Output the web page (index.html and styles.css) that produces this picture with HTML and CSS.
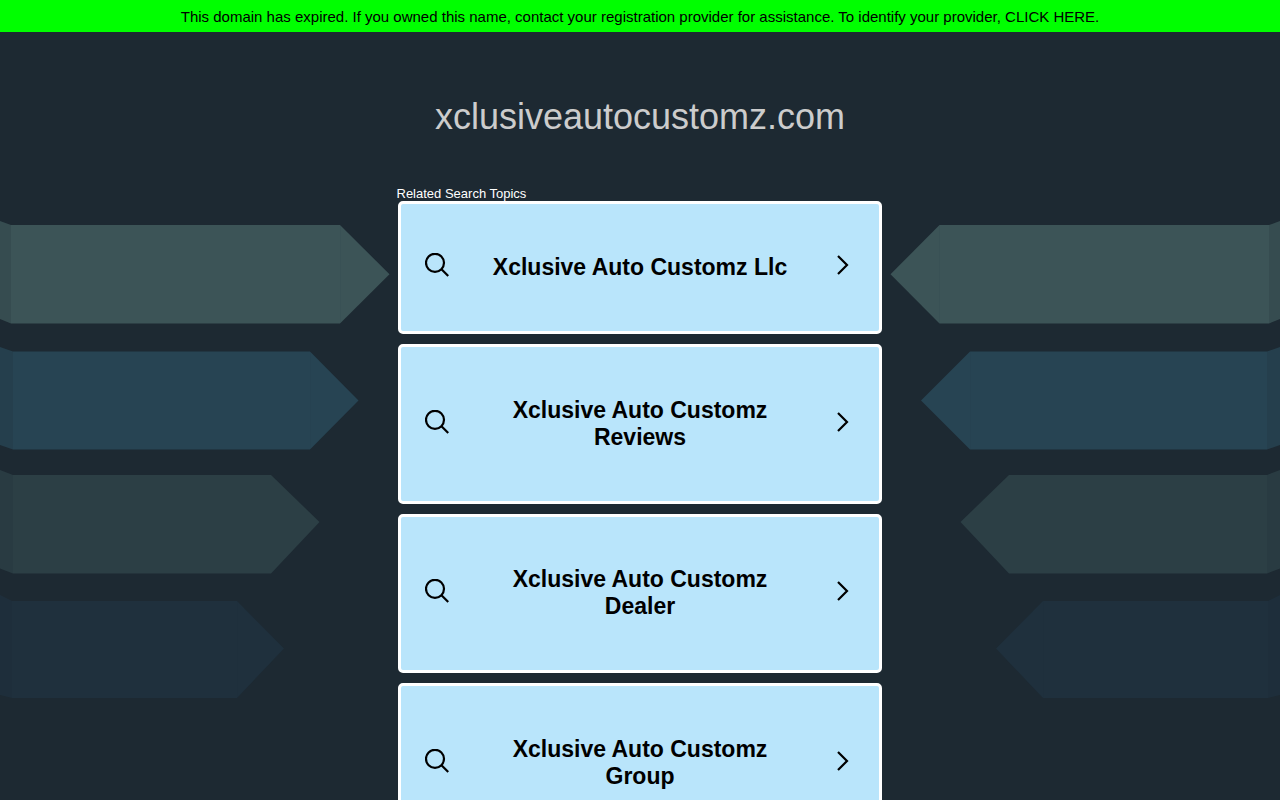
FILE: index.html
```html
<!DOCTYPE html>
<html lang="en">
<head>
<meta charset="utf-8">
<title>xclusiveautocustomz.com</title>
<link rel="stylesheet" href="styles.css">
</head>
<body>
<svg class="backdrop" width="1280" height="800" viewBox="0 0 1280 800" aria-hidden="true">
  <g class="arrow-a">
    <path class="tail" d="M0 221 11 225V323.500L0 319Z"/>
    <path d="M11 225H340L389.500 274.300 340 323.500H11Z"/>
    <path class="seam" d="M340.500 225V323.500"/>
    <path class="tail" d="M1280 221 1269 225V323.500L1280 319Z"/>
    <path d="M1269 225H939.500L890.500 274.300 939.500 323.500H1269Z"/>
    <path class="seam" d="M939.500 225V323.500"/>
  </g>
  <g class="arrow-b">
    <path class="tail" d="M0 347 13 351.500V449.500L0 445Z"/>
    <path d="M13 351.500H310L358.500 400.500 310 449.500H13Z"/>
    <path class="seam" d="M310.500 351.500V449.500"/>
    <path class="tail" d="M1280 347 1267 351.500V449.500L1280 445Z"/>
    <path d="M1267 351.500H970L921 400.500 970 449.500H1267Z"/>
    <path class="seam" d="M970.500 351.500V449.500"/>
  </g>
  <g class="arrow-c">
    <path class="tail" d="M0 470 13 475V573.500L0 568.500Z"/>
    <path d="M13 475H271L319.500 522 271 573.500H13Z"/>
    <path class="tail" d="M1280 470 1267 475V573.500L1280 568.500Z"/>
    <path d="M1267 475H1009L960.500 522 1009 573.500H1267Z"/>
  </g>
  <g class="arrow-d">
    <path class="tail" d="M0 595 12 601V698L0 695Z"/>
    <path d="M12 601H237L284 648.500 237 698H12Z"/>
    <path class="seam" d="M237.500 601V698"/>
    <path class="tail" d="M1280 595 1268 601V698L1280 695Z"/>
    <path d="M1268 601H1043L996 648.500 1043 698H1268Z"/>
    <path class="seam" d="M1043.500 601V698"/>
  </g>
</svg>
<div class="page">
  <p class="notice">This domain has expired. If you owned this name, contact your registration provider for assistance. To identify your provider, CLICK HERE.</p>
  <h1 class="domain">xclusiveautocustomz.com</h1>
  <main class="topics">
    <p class="topics-label">Related Search Topics</p>
    <ul class="cards">
      <li class="card card-short">
        <svg class="icon-search" viewBox="0 0 24 24"><circle cx="10" cy="9.800" r="9"/><path d="M16.500 16.200 23.200 23"/></svg>
        <span class="card-text">Xclusive Auto Customz Llc</span>
        <svg class="icon-chevron" viewBox="0 0 12 20"><path d="M1 1 10 10 1 19"/></svg>
      </li>
      <li class="card">
        <svg class="icon-search" viewBox="0 0 24 24"><circle cx="10" cy="9.800" r="9"/><path d="M16.500 16.200 23.200 23"/></svg>
        <span class="card-text">Xclusive Auto Customz Reviews</span>
        <svg class="icon-chevron" viewBox="0 0 12 20"><path d="M1 1 10 10 1 19"/></svg>
      </li>
      <li class="card">
        <svg class="icon-search" viewBox="0 0 24 24"><circle cx="10" cy="9.800" r="9"/><path d="M16.500 16.200 23.200 23"/></svg>
        <span class="card-text">Xclusive Auto Customz Dealer</span>
        <svg class="icon-chevron" viewBox="0 0 12 20"><path d="M1 1 10 10 1 19"/></svg>
      </li>
      <li class="card">
        <svg class="icon-search" viewBox="0 0 24 24"><circle cx="10" cy="9.800" r="9"/><path d="M16.500 16.200 23.200 23"/></svg>
        <span class="card-text">Xclusive Auto Customz Group</span>
        <svg class="icon-chevron" viewBox="0 0 12 20"><path d="M1 1 10 10 1 19"/></svg>
      </li>
    </ul>
  </main>
</div>
</body>
</html>
```
FILE: styles.css
```css
* {
  box-sizing: border-box;
}

html,
body {
  height: 100%;
  margin: 0;
  overflow: hidden;
}

body {
  position: relative;
  background: #1d2932;
  font-family: "Liberation Sans", Arial, sans-serif;
}

.backdrop {
  position: absolute;
  top: 0;
  left: 0;
}

.backdrop .tail {
  opacity: 0.82;
}

.backdrop .seam {
  fill: none;
  stroke: #1d2932;
  stroke-opacity: 0.05;
}

.arrow-a path {
  fill: #3c5457;
}

.arrow-b path {
  fill: #274453;
}

.arrow-c path {
  fill: #2c3f45;
}

.arrow-d path {
  fill: #1f303d;
}

.page {
  position: relative;
  display: flex;
  flex-direction: column;
  align-items: center;
}

.notice {
  width: 100%;
  height: 32px;
  margin: 0;
  background: #00ff00;
  color: #000;
  font-size: 15px;
  line-height: 34px;
  text-align: center;
}

.domain {
  margin: 62px 0 0;
  color: #cccccc;
  font-size: 36px;
  font-weight: 400;
  line-height: 46px;
}

.topics {
  width: 487px;
  margin-top: 46px;
}

.topics-label {
  margin: 0;
  color: #fff;
  font-size: 13px;
  line-height: 15px;
}

.cards {
  display: flex;
  flex-direction: column;
  gap: 10px;
  width: 484px;
  margin: 0 0 0 1.500px;
  padding: 0;
  list-style: none;
}

.card {
  display: grid;
  grid-template-columns: 24px 1fr 24px;
  column-gap: 20px;
  align-items: center;
  justify-items: center;
  height: 159.500px;
  padding: 0 24px;
  border: 3px solid #fff;
  border-radius: 5px;
  background: #b9e5fb;
}

.card-short {
  height: 133px;
}

.card-text {
  max-width: 310px;
  color: #000;
  font-size: 23px;
  font-weight: 700;
  line-height: 27px;
  text-align: center;
}

.icon-search,
.icon-chevron {
  position: relative;
  top: -2px;
  fill: none;
  stroke: #000;
  stroke-width: 2.200;
}

.card-short .icon-search,
.card-short .icon-chevron {
  top: -3px;
}

.icon-search {
  width: 24px;
  height: 24px;
}

.icon-chevron {
  width: 12px;
  height: 20px;
}
```
